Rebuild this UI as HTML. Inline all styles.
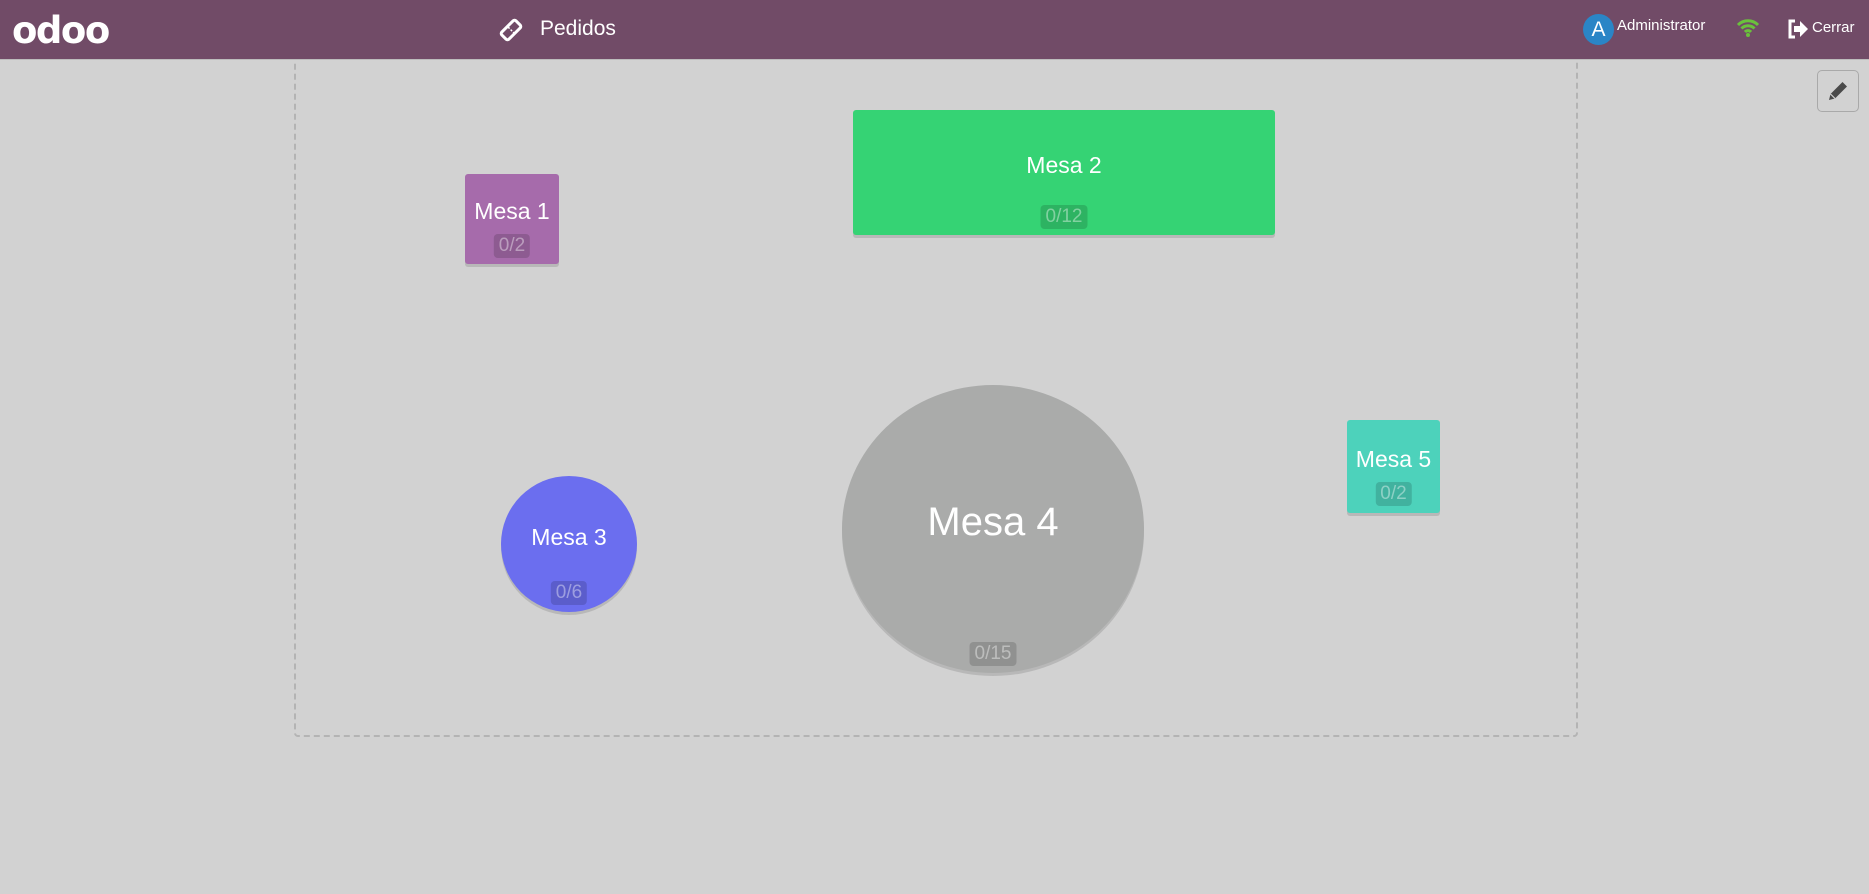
<!DOCTYPE html>
<html><head><meta charset="utf-8"><style>
body{margin:0;width:1869px;height:894px;background:#d2d2d2;font-family:"Liberation Sans",sans-serif;overflow:hidden;position:relative}
.hdr{position:absolute;left:0;top:0;width:1869px;height:59px;background:#714b67;border-bottom:1px solid #bcbcbc;z-index:5}
.floor{position:absolute;left:294px;top:40px;width:1284px;height:697px;border:2px dashed #b4b4b4;border-radius:4px;box-sizing:border-box}
.t{position:absolute;color:#fff;text-align:center;box-shadow:0 3px 0 rgba(0,0,0,.12);border-radius:3px}
.t .n{position:absolute;left:0;right:0;font-size:23px}
.t .b{position:absolute;left:50%;transform:translateX(-50%);background:rgba(0,0,0,.15);color:rgba(255,255,255,.4);font-size:19px;padding:1px 5px;border-radius:4px}
</style></head><body>
<div class="hdr">
<div style="position:absolute;left:12px;top:9px;color:#fff;font-size:37px;font-weight:bold;letter-spacing:-1.5px;font-family:'DejaVu Sans',sans-serif">odoo</div>
<svg style="position:absolute;left:498px;top:17px" width="26" height="26" viewBox="0 0 26 26"><g transform="rotate(-45 13 13)"><rect x="3" y="8" width="20" height="10" rx="2" fill="none" stroke="#fff" stroke-width="3"/><line x1="13" y1="9" x2="13" y2="17" stroke="#fff" stroke-width="1.5" stroke-dasharray="2 1.5"/></g></svg>
<div style="position:absolute;left:540px;top:17px;color:#fff;font-size:21px">Pedidos</div>
<div style="position:absolute;left:1583px;top:14px;width:31px;height:31px;border-radius:50%;background:#2a85c6;color:#fff;font-size:21px;text-align:center;line-height:31px">A</div>
<div style="position:absolute;left:1617px;top:17px;color:#fff;font-size:15px">Administrator</div>
<svg style="position:absolute;left:1736px;top:18px" width="24" height="20" viewBox="0 0 24 20"><path d="M2 7a14 14 0 0 1 20 0M5.5 10.5a9 9 0 0 1 13 0M9 14a4 4 0 0 1 6 0" fill="none" stroke="#6ac13c" stroke-width="3"/><circle cx="12" cy="17" r="2" fill="#6ac13c"/></svg>
<svg style="position:absolute;left:1787px;top:19px" width="22" height="20" viewBox="0 0 22 20"><path d="M8 2H3v16h5" fill="none" stroke="#fff" stroke-width="3"/><path d="M7 7h6V2l8 8-8 8v-5H7z" fill="#fff"/></svg>
<div style="position:absolute;left:1812px;top:19px;color:#fff;font-size:15px">Cerrar</div>
</div>
<div class="floor"></div>
<div style="position:absolute;left:1817px;top:70px;width:42px;height:42px;border:1px solid #a9a9a9;border-radius:5px;box-sizing:border-box"></div>
<svg style="position:absolute;left:1826px;top:79px" width="24" height="24" viewBox="0 0 24 24"><path d="M3 21l1.5-6 12-12 4.5 4.5-12 12z" fill="#4a4a4a"/><path d="M4.5 15l4.5 4.5" stroke="#d2d2d2" stroke-width="1.2"/></svg>
<div class="t" style="left:465px;top:174px;width:94px;height:90px;background:#a66bab"><div class="n" style="top:24px">Mesa 1</div><div class="b" style="top:60px">0/2</div></div>
<div class="t" style="left:853px;top:110px;width:422px;height:125px;background:#35d374"><div class="n" style="top:42px">Mesa 2</div><div class="b" style="top:95px">0/12</div></div>
<div class="t" style="left:501px;top:476px;width:136px;height:136px;border-radius:50%;background:#6b6eef"><div class="n" style="top:48px">Mesa 3</div><div class="b" style="top:105px">0/6</div></div>
<div class="t" style="left:842px;top:385px;width:302px;height:288px;border-radius:50%;background:#aaabaa"><div class="n" style="top:115px;font-size:40px">Mesa 4</div><div class="b" style="top:257px">0/15</div></div>
<div class="t" style="left:1347px;top:420px;width:93px;height:93px;background:#4dd2bb"><div class="n" style="top:26px">Mesa 5</div><div class="b" style="top:62px">0/2</div></div>
</body></html>
